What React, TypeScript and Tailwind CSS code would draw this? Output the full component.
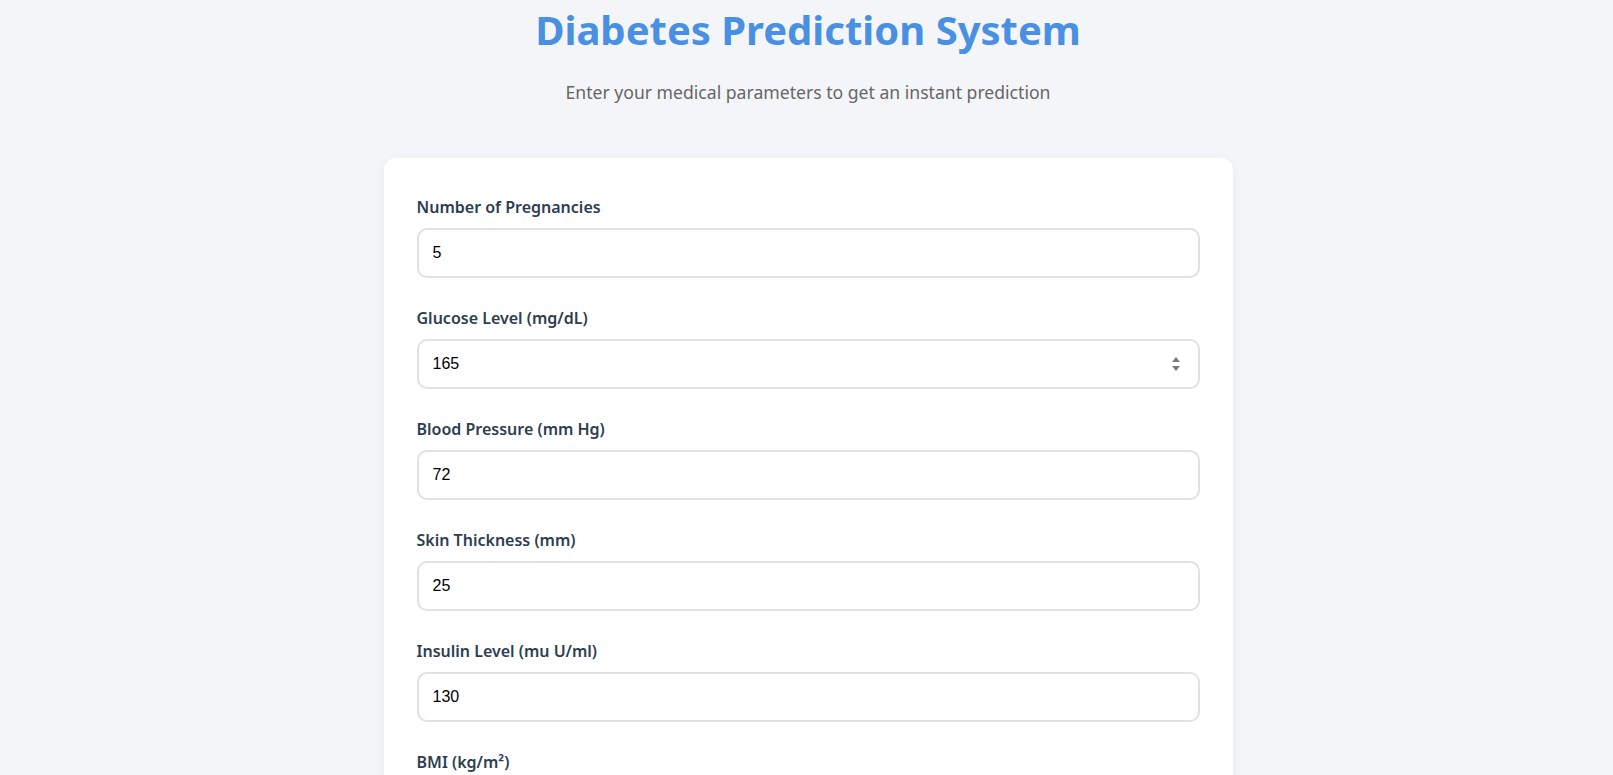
import { useState } from "react";

const fields = [
  { label: "Number of Pregnancies", value: "5" },
  { label: "Glucose Level (mg/dL)", value: "165", spinner: true },
  { label: "Blood Pressure (mm Hg)", value: "72" },
  { label: "Skin Thickness (mm)", value: "25" },
  { label: "Insulin Level (mu U/ml)", value: "130" },
  { label: "BMI (kg/m²)", value: "33.6" },
  { label: "Diabetes Pedigree Function", value: "0.627" },
  { label: "Age (years)", value: "50" },
];

function Spinner() {
  return (
    <svg
      width="10"
      height="16"
      viewBox="0 0 10 16"
      className="absolute right-[19px] top-1/2 -translate-y-1/2"
    >
      <path d="M5 1 L9 6 L1 6 Z" fill="#7a7a7a" />
      <path d="M1 10 L9 10 L5 15 Z" fill="#7a7a7a" />
    </svg>
  );
}

export default function App() {
  const [values, setValues] = useState(fields.map((f) => f.value));

  return (
    <div className="min-h-screen bg-[#f4f5f9] pl-[3px] font-['Noto_Sans',sans-serif]">
      <header className="flex flex-col items-center pt-[2px]">
        <h1 className="text-[40px] leading-[56px] font-bold text-[#4a90e2]">
          Diabetes Prediction System
        </h1>
        <p className="mt-[22px] text-[17.6px] leading-[24px] text-[#666666]">
          Enter your medical parameters to get an instant prediction
        </p>
      </header>

      <main className="mx-auto mt-[54px] w-[849px] rounded-[12px] bg-white px-[33px] pt-[37px] pb-[40px] shadow-[0_2px_12px_rgba(0,0,0,0.05)]">
        <form onSubmit={(e) => e.preventDefault()}>
          {fields.map((field, i) => (
            <div key={field.label} className="mb-[28px]">
              <label className="mb-[9px] block text-[16px] leading-[24px] font-semibold text-[#2c3e50]">
                {field.label}
              </label>
              <div className="relative">
                <input
                  type="text"
                  value={values[i]}
                  onChange={(e) => {
                    const next = [...values];
                    next[i] = e.target.value;
                    setValues(next);
                  }}
                  className="block h-[50px] w-full rounded-[10px] border-2 border-[#e1e1e1] bg-white px-[14px] font-['Liberation_Sans',Arial,sans-serif] text-[16px] text-black outline-none"
                />
                {field.spinner && <Spinner />}
              </div>
            </div>
          ))}
        </form>
      </main>
    </div>
  );
}
